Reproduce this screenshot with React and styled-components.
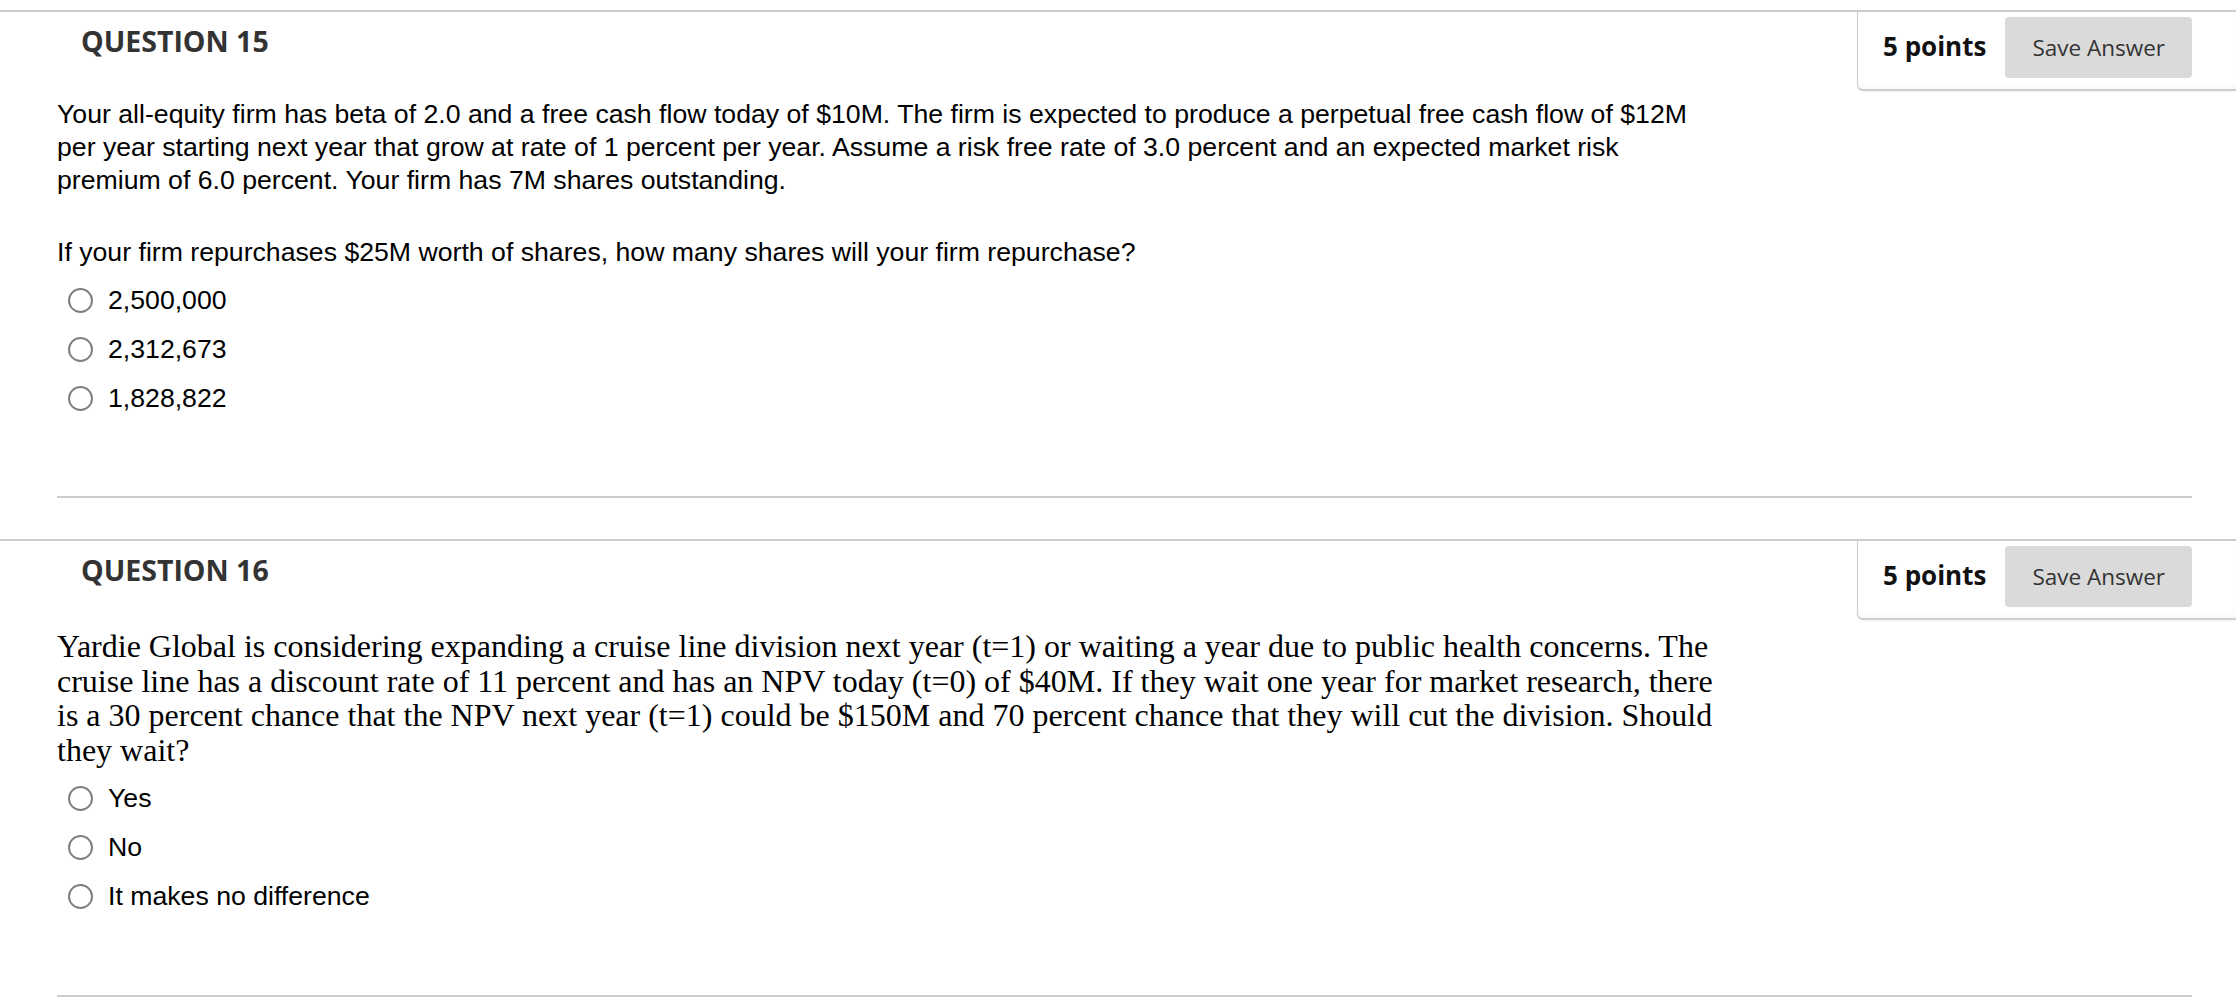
import React from "react";
import styled, { createGlobalStyle } from "styled-components";

const questions = [
  {
    number: 15,
    points: 5,
    serif: false,
    prompt: [
      "Your all-equity firm has beta of 2.0 and a free cash flow today of $10M. The firm is expected to produce a perpetual free cash flow of $12M per year starting next year that grow at rate of 1 percent per year. Assume a risk free rate of 3.0 percent and an expected market risk premium of 6.0 percent. Your firm has 7M shares outstanding.",
      "If your firm repurchases $25M worth of shares, how many shares will your firm repurchase?",
    ],
    options: ["2,500,000", "2,312,673", "1,828,822"],
  },
  {
    number: 16,
    points: 5,
    serif: true,
    prompt: [
      "Yardie Global is considering expanding a cruise line division next year (t=1) or waiting a year due to public health concerns. The cruise line has a discount rate of 11 percent and has an NPV today (t=0) of $40M. If they wait one year for market research, there is a 30 percent chance that the NPV next year (t=1) could be $150M and 70 percent chance that they will cut the division. Should they wait?",
    ],
    options: ["Yes", "No", "It makes no difference"],
  },
];

const GlobalStyle = createGlobalStyle`
  html, body {
    margin: 0;
    padding: 0;
    background: #ffffff;
  }
  body {
    font-family: "Liberation Sans", Arial, sans-serif;
    color: #000;
  }
`;

const Page = styled.main`
  padding-top: 10px;
  width: 2236px;
`;

const Question = styled.section`
  border-top: 2px solid #cdcdcd;
  & + & {
    margin-top: 41px;
  }
`;

const Header = styled.header`
  display: flex;
  align-items: flex-start;
  height: 79px;
`;

const Title = styled.h2`
  margin: 9px 0 0 81px;
  font-family: "Open Sans", sans-serif;
  font-weight: 700;
  font-size: 28.5px;
  line-height: 40px;
  color: #333;
`;

const PointsBox = styled.div`
  margin-left: auto;
  box-sizing: border-box;
  width: 379px;
  height: 79px;
  display: flex;
  align-items: flex-start;
  gap: 19px;
  padding: 5px 44px 0 25px;
  border-left: 1px solid #cdcdcd;
  border-bottom: 2px solid #cdcdcd;
  border-bottom-left-radius: 6px;
  box-shadow: inset 0 -3px 4px rgba(0, 0, 0, 0.03), 0 1px 2px rgba(0, 0, 0, 0.06);
`;

const Points = styled.span`
  font-family: "Open Sans", sans-serif;
  font-weight: 700;
  font-size: 26px;
  line-height: 58px;
  color: #111;
  white-space: nowrap;
`;

const SaveButton = styled.button`
  width: 190px;
  height: 61px;
  border: none;
  border-radius: 4px;
  background: #dadada;
  font-family: "Open Sans", sans-serif;
  font-size: 22.5px;
  color: #333;
  padding: 0;
  cursor: pointer;
`;

const Body = styled.div`
  padding: 0 44px 0 57px;
`;

const Prompt = styled.p`
  max-width: 1665px;
  margin: 0;
  font-family: ${(p) =>
    p.$serif ? '"Liberation Serif", "Times New Roman", serif' : '"Liberation Sans", Arial, sans-serif'};
  font-size: ${(p) => (p.$serif ? "32px" : "26.67px")};
  line-height: ${(p) => (p.$serif ? "34.5px" : "33px")};
  margin-top: ${(p) => (p.$first ? (p.$serif ? "9px" : "7px") : "38.5px")};
`;

const Options = styled.ul`
  list-style: none;
  margin: 7px 0 0;
  padding: 0;
`;

const Option = styled.li`
  display: flex;
  align-items: center;
  height: 49px;
  font-size: 26.67px;
`;

const Radio = styled.span`
  box-sizing: border-box;
  width: 25px;
  height: 25px;
  margin: 0 15px 0 11px;
  border: 2px solid #7f7f7f;
  border-radius: 50%;
  background: #fff;
  flex-shrink: 0;
`;

const Divider = styled.hr`
  margin: 73.5px 0 0;
  border: none;
  border-top: 2px solid #cdcdcd;
  height: 0;
`;

export default function App() {
  return (
    <Page>
      <GlobalStyle />
      {questions.map((q) => (
        <Question key={q.number}>
          <Header>
            <Title>QUESTION {q.number}</Title>
            <PointsBox>
              <Points>{q.points} points</Points>
              <SaveButton>Save Answer</SaveButton>
            </PointsBox>
          </Header>
          <Body>
            {q.prompt.map((text, i) => (
              <Prompt key={i} $serif={q.serif} $first={i === 0}>
                {text}
              </Prompt>
            ))}
            <Options>
              {q.options.map((opt) => (
                <Option key={opt}>
                  <Radio />
                  {opt}
                </Option>
              ))}
            </Options>
            <Divider />
          </Body>
        </Question>
      ))}
    </Page>
  );
}
